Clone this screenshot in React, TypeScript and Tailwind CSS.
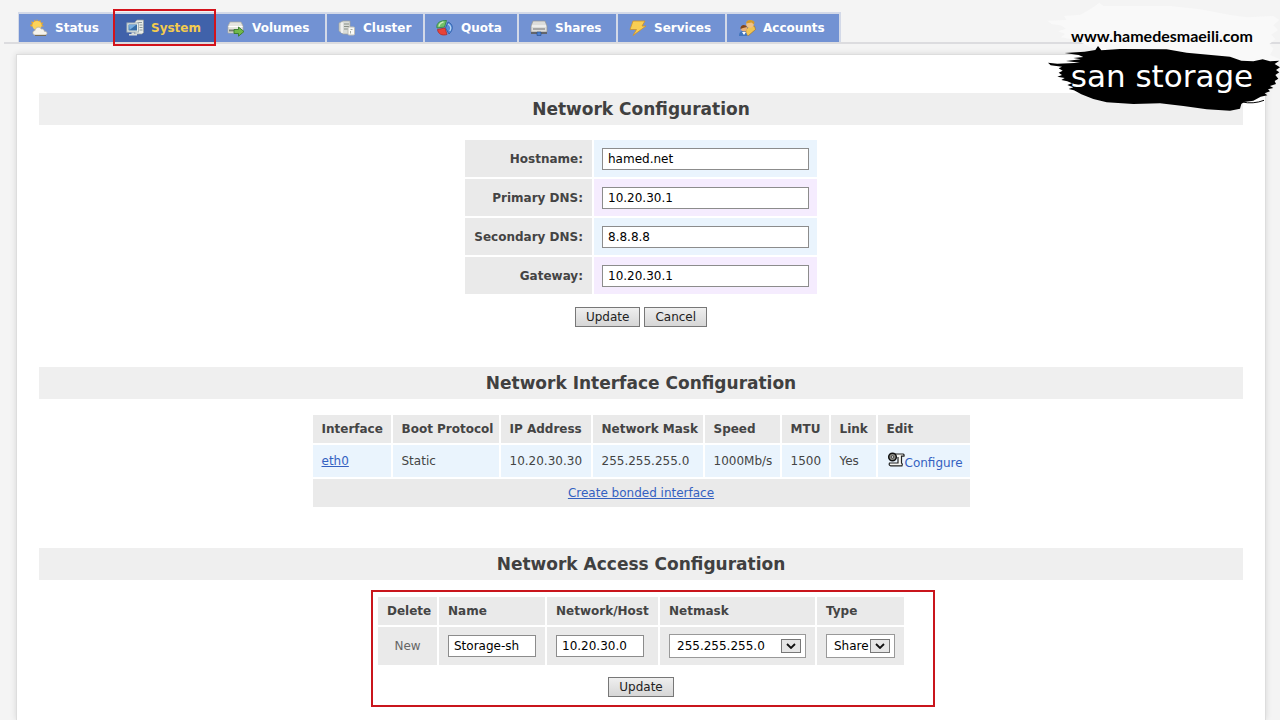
import type { ReactNode } from "react";
import clsx from "clsx";

interface Tab {
  label: string;
  icon: ReactNode;
  width: string;
  active?: boolean;
}

const tabs: Tab[] = [
  { label: "Status", icon: <StatusIcon />, width: "w-[96px]" },
  { label: "System", icon: <SystemIcon />, width: "w-[101px]", active: true },
  { label: "Volumes", icon: <VolumesIcon />, width: "w-[111px]" },
  { label: "Cluster", icon: <ClusterIcon />, width: "w-[98px]" },
  { label: "Quota", icon: <QuotaIcon />, width: "w-[94px]" },
  { label: "Shares", icon: <SharesIcon />, width: "w-[99px]" },
  { label: "Services", icon: <ServicesIcon />, width: "w-[109px]" },
  { label: "Accounts", icon: <AccountsIcon />, width: "w-[114px]" },
];

const hostFields = [
  { id: "hostname", label: "Hostname:", value: "hamed.net" },
  { id: "primary-dns", label: "Primary DNS:", value: "10.20.30.1" },
  { id: "secondary-dns", label: "Secondary DNS:", value: "8.8.8.8" },
  { id: "gateway", label: "Gateway:", value: "10.20.30.1" },
];

const interfaceColumns = [
  { label: "Interface", width: "w-[78px]" },
  { label: "Boot Protocol", width: "w-[106px]" },
  { label: "IP Address", width: "w-[90px]" },
  { label: "Network Mask", width: "w-[110px]" },
  { label: "Speed", width: "w-[75px]" },
  { label: "MTU", width: "w-[47px]" },
  { label: "Link", width: "w-[45px]" },
  { label: "Edit", width: "w-[92px]" },
];

const accessColumns = [
  { label: "Delete", width: "w-[59px]" },
  { label: "Name", width: "w-[106px]" },
  { label: "Network/Host", width: "w-[111px]" },
  { label: "Netmask", width: "w-[155px]" },
  { label: "Type", width: "w-[87px]" },
];

export default function App() {
  return (
    <div className="relative flex min-h-screen flex-col overflow-hidden bg-[#f4f4f4] pt-3 font-['DejaVu_Sans',Verdana,sans-serif] text-xs leading-4 text-[#444]">
      <TabBar />
      <main className="mt-[10px] mr-[14px] ml-4 flex-1 border border-b-0 border-[#ddd] bg-white px-[22px] pt-[38px] shadow-[0_0_6px_rgba(0,0,0,0.12)]">
        <NetworkConfiguration />
        <InterfaceConfiguration />
        <AccessConfiguration />
      </main>
      <Branding />
    </div>
  );
}

function TabBar() {
  return (
    <nav className="ml-1 flex border-b-2 border-[#dcdcdf] pl-[14px]">
      <div className="flex border-t-2 border-l border-[#d3d9e8]">
        {tabs.map((tab) => (
          <a
            key={tab.label}
            href={`#${tab.label.toLowerCase()}`}
            className={clsx(
              "relative flex h-7 items-center gap-[7px] border-r-2 border-[#d3d9e8] pl-[11px] font-bold",
              tab.width,
              tab.active ? "bg-[#4062aa] text-[#f3cb4e]" : "bg-[#7292d3] text-white",
            )}
          >
            <svg viewBox="0 0 18 18" className="size-[18px] shrink-0" aria-hidden="true">
              {tab.icon}
            </svg>
            {tab.label}
            {tab.active && (
              <span className="pointer-events-none absolute -top-[5px] -right-[2px] -bottom-[4px] -left-[2px] z-10 border-2 border-[#d3131b]" />
            )}
          </a>
        ))}
      </div>
    </nav>
  );
}

function SectionTitle({ children }: { children: ReactNode }) {
  return (
    <h2 className="bg-[#efefef] text-center text-[17px] leading-8 font-bold text-[#404040]">
      {children}
    </h2>
  );
}

function Button({ children }: { children: ReactNode }) {
  return (
    <button
      type="button"
      className="h-5 border border-[#777] bg-linear-to-b from-[#efefef] to-[#d6d6d6] px-[10px] text-[#222]"
    >
      {children}
    </button>
  );
}

function NetworkConfiguration() {
  return (
    <section>
      <SectionTitle>Network Configuration</SectionTitle>
      <form className="flex flex-col items-center pt-[13px]">
        <table className="border-separate border-spacing-[2px]">
          <tbody>
            {hostFields.map((field, i) => (
              <tr key={field.id} className="h-[37px]">
                <th scope="row" className="w-[127px] bg-[#eaeaea] pr-[9px] text-right">
                  <label htmlFor={field.id}>{field.label}</label>
                </th>
                <td className={clsx("w-[223px] px-2", i % 2 ? "bg-[#f5ecfe]" : "bg-[#eaf4fd]")}>
                  <input
                    id={field.id}
                    defaultValue={field.value}
                    className="block h-[22px] w-full border border-[#8c8c8c] bg-white px-[5px] text-black"
                  />
                </td>
              </tr>
            ))}
          </tbody>
        </table>
        <div className="mt-[11px] flex gap-1">
          <Button>Update</Button>
          <Button>Cancel</Button>
        </div>
      </form>
    </section>
  );
}

function InterfaceConfiguration() {
  return (
    <section className="mt-10">
      <SectionTitle>Network Interface Configuration</SectionTitle>
      <div className="flex justify-center pt-[14px]">
        <table className="border-separate border-spacing-[2px] text-left">
          <thead>
            <tr className="h-7">
              {interfaceColumns.map((col) => (
                <th key={col.label} className={clsx("bg-[#eaeaea] pl-[9px]", col.width)}>
                  {col.label}
                </th>
              ))}
            </tr>
          </thead>
          <tbody>
            <tr className="h-8 bg-[#eaf4fd]">
              <td className="pl-[9px]">
                <a href="#eth0" className="text-[#3461c1] underline">
                  eth0
                </a>
              </td>
              <td className="pl-[9px]">Static</td>
              <td className="pl-[9px]">10.20.30.30</td>
              <td className="pl-[9px]">255.255.255.0</td>
              <td className="pl-[9px]">1000Mb/s</td>
              <td className="pl-[9px]">1500</td>
              <td className="pl-[9px]">Yes</td>
              <td className="pl-[9px]">
                <a href="#configure" className="flex items-end text-[#3461c1]">
                  <ConfigureIcon />
                  Configure
                </a>
              </td>
            </tr>
            <tr className="h-7 bg-[#eaeaea] text-center">
              <td colSpan={8}>
                <a href="#bond" className="text-[#3461c1] underline">
                  Create bonded interface
                </a>
              </td>
            </tr>
          </tbody>
        </table>
      </div>
    </section>
  );
}

function AccessConfiguration() {
  return (
    <section className="mt-[39px]">
      <SectionTitle>Network Access Configuration</SectionTitle>
      <form className="relative mx-auto flex w-fit flex-col items-center pt-[15px] pb-[10px]">
        <table className="border-separate border-spacing-[2px] text-left">
          <thead>
            <tr className="h-7">
              {accessColumns.map((col) => (
                <th key={col.label} className={clsx("bg-[#eaeaea] pl-[9px]", col.width)}>
                  {col.label}
                </th>
              ))}
            </tr>
          </thead>
          <tbody>
            <tr className="h-[38px] bg-[#eaeaea]">
              <td className="text-center text-[#666]">New</td>
              <td className="pl-[9px]">
                <TextBox label="Name" value="Storage-sh" />
              </td>
              <td className="pl-[9px]">
                <TextBox label="Network/Host" value="10.20.30.0" />
              </td>
              <td className="px-[9px]">
                <Select
                  label="Netmask"
                  options={["255.255.255.0", "255.255.0.0", "255.0.0.0"]}
                />
              </td>
              <td className="px-[9px]">
                <Select label="Type" options={["Share"]} />
              </td>
            </tr>
          </tbody>
        </table>
        <div className="mt-[10px]">
          <Button>Update</Button>
        </div>
        <span className="pointer-events-none absolute top-[10px] -right-[29px] bottom-0 -left-[5px] border-2 border-[#c9151c]" />
      </form>
    </section>
  );
}

function TextBox({ label, value }: { label: string; value: string }) {
  return (
    <input
      aria-label={label}
      defaultValue={value}
      className="block h-[22px] w-[88px] border border-[#8c8c8c] bg-white px-[5px] text-black"
    />
  );
}

function Select({ label, options }: { label: string; options: string[] }) {
  return (
    <div className="relative">
      <select
        aria-label={label}
        className="block h-6 w-full appearance-none border border-[#999] bg-white pl-[7px] text-black"
      >
        {options.map((option) => (
          <option key={option}>{option}</option>
        ))}
      </select>
      <span className="pointer-events-none absolute top-[5px] right-[5px] flex h-[14px] w-5 items-center justify-center border border-[#777] bg-[#e6e6e6]">
        <svg viewBox="0 0 10 6" className="h-[6px] w-[10px]" aria-hidden="true">
          <path d="M1 1l4 4 4-4" fill="none" stroke="#111" strokeWidth="1.8" />
        </svg>
      </span>
    </div>
  );
}

function Branding() {
  return (
    <div className="absolute top-0 right-0 h-[115px] w-[240px] text-center">
      <svg viewBox="0 0 720 345" className="absolute inset-0 size-full" aria-hidden="true">
        <path
          d="M35 72 22 62 80 60 72 48 122 44 160 22 178 8 190 18 390 18 480 28 575 46 622 52 700 48 718 60 700 76 714 90 694 104 706 118 688 132 700 146 690 165 720 178 700 200 600 185 180 150 150 142 110 120 62 112 76 102 54 94 78 86 62 76Z"
          fill="#f9f9f9"
        />
        <path
          d="M24 188 52 191 120 188 78 183 122 178 100 174 130 171 116 165 74 159 134 155 166 150 174 138 184 151 240 147 380 148 440 158 570 170 604 182 640 184 668 178 690 184 718 182 704 192 720 202 708 210 718 217 706 225 715 236 704 243 708 252 690 258 700 264 684 268 690 274 674 280 682 286 662 290 640 302 612 306 604 312 600 326 570 332 500 328 430 318 360 310 280 312 200 307 160 297 124 283 102 271 86 267 100 262 82 255 96 250 82 244 64 240 74 234 52 230 66 225 56 218 68 212 56 205 66 200 32 196Z"
          fill="#000"
        />
        <path d="M606 306Q640 313 672 301" fill="none" stroke="#000" strokeWidth="3" />
      </svg>
      <div className="relative flex flex-col pt-6 pl-1">
        <a
          href="#home"
          className="font-[Lato,sans-serif] text-base leading-6 font-bold text-black"
        >
          www.hamedesmaeili.com
        </a>
        <span className="mt-3 font-['DejaVu_Sans',sans-serif] text-[31px] leading-8 text-white">
          san storage
        </span>
      </div>
    </div>
  );
}

function StatusIcon() {
  return (
    <>
      <path
        d="M7 0l1 2.5L10.500 1l.2 2.700 2.800-.2-1.500 2.300L14 7.500H1L0 6l2-1L1 2.500l2.700.5L4.500.5l1.500 2z"
        fill="#e8a72c"
      />
      <circle cx="7" cy="6.500" r="4.600" fill="#fbd35b" />
      <path
        d="M5 16c-3-.3-2.600-4.300 0-4.400.5-4 5-4.500 6.300-1.500 1.500-.7 3 .4 3 2.200 3.300-.2 3.700 3.500.8 3.700z"
        fill="#f5f3ec"
        stroke="#b7b09b"
        strokeWidth=".7"
      />
      <path d="M5 16.500h11" stroke="#766d58" />
    </>
  );
}

function SystemIcon() {
  return (
    <>
      <path d="M9 3l2-2h6.500v12.500L16 15H9z" fill="#e7ebe7" stroke="#929b9b" strokeWidth=".7" />
      <path d="M11.500 3.500H16M13.500 6h3M13.500 8.500h3M13.500 11h3" stroke="#8c999c" />
      <rect x="1" y="4" width="11.500" height="9" fill="#e9efeb" stroke="#a7b5b8" />
      <rect x="2.500" y="5.500" width="8.500" height="6" fill="#356da6" />
      <path d="M3 6h7l-6.500 5z" fill="#76aee0" />
      <path d="M5.500 13.500h3V15H11v1.500H3V15h2.500z" fill="#d9dedb" />
    </>
  );
}

function VolumesIcon() {
  return (
    <>
      <path d="M3 3h11l2 4v7H1V7z" fill="#e5e5df" stroke="#a9a9a1" strokeWidth=".7" />
      <path d="M1.500 7.500h14" stroke="#fff" />
      <path d="M2 10.500h7v2H2z" fill="#77806f" />
      <path
        d="M7 10.500h4.500V8l5.500 4.500-5.500 4.700v-2.700H7z"
        fill="#72b84a"
        stroke="#367a2c"
        strokeWidth=".9"
      />
    </>
  );
}

function ClusterIcon() {
  return (
    <>
      <path d="M1 4l4-2h7v13H5l-4-3z" fill="#d9dcd8" stroke="#a0a59f" strokeWidth=".7" />
      <path d="M4 3.500v10.500" stroke="#f9f9f7" strokeWidth="1.500" />
      <path d="M6 5h5M6 7.500h5M6 10h4" stroke="#899087" strokeWidth="1.200" />
      <rect x="10" y="8" width="6.500" height="8" rx="1" fill="#fafaf6" stroke="#bebeb6" />
      <path d="M12.500 10.500h2M12.500 12v2.500" stroke="#a8aca5" />
    </>
  );
}

function QuotaIcon() {
  return (
    <>
      <path
        d="M1 9C0 4 4 1.500 10.500 1.500L8.500 8z"
        fill="#72c069"
        stroke="#2c8540"
        strokeWidth=".8"
      />
      <path
        d="M12 3c5.500 2 5.500 8 1 12L9.500 9z"
        fill="#568dd8"
        stroke="#2658a5"
        strokeWidth=".8"
      />
      <path d="M1.500 10.500L9 9l2 6.500c-5 1.500-9-.5-9.500-5z" fill="#e84339" stroke="#b32929" strokeWidth=".8" />
      <path d="M12 5c3 1.500 3.500 4.500 1.800 7" stroke="#b9d7f6" fill="none" strokeWidth="1.300" />
      <path d="M3 7.500c.3-2.500 2-4 4.500-4.500" stroke="#caebba" fill="none" strokeWidth="1.300" />
    </>
  );
}

function SharesIcon() {
  return (
    <>
      <path d="M3 2h12l2 5v6H1V7z" fill="#dcdcda" stroke="#949494" strokeWidth=".7" />
      <path d="M2 7h14" stroke="#fff" />
      <path d="M3 10h12" stroke="#969696" strokeWidth="1.500" />
      <path d="M1 14h16" stroke="#62656b" strokeWidth="2" />
      <path d="M7 13h4v3.500H7z" fill="#477fd0" stroke="#274c88" strokeWidth=".6" />
    </>
  );
}

function ServicesIcon() {
  return (
    <path
      d="M4 2h12l-3 5h4L4 16.500l3.500-6H1z"
      fill="#f9ce53"
      stroke="#cb922c"
      strokeWidth=".8"
    />
  );
}

function AccountsIcon() {
  return (
    <>
      <path d="M8 11l3-4h5.500l1 3.500-7 6-3-1z" fill="#f0c452" stroke="#a06e24" strokeWidth=".6" />
      <circle cx="12" cy="5" r="3.800" fill="#f0c285" />
      <path d="M8 4.500C8 0 15 0 16.500 3l-.5 2.500-2.500-2z" fill="#d19a2e" />
      <path d="M1 17c0-4 2-5 4.500-5S9 14 9 17z" fill="#4275bd" />
      <path d="M4 13l2 3 2-3z" fill="#fff" />
      <circle cx="6" cy="9.500" r="3" fill="#e9b078" />
      <path d="M2.500 10C2 5 8 5 9 8L5 9z" fill="#844619" />
    </>
  );
}

function ConfigureIcon() {
  return (
    <svg viewBox="0 0 18 16" className="mb-[3px] h-4 w-[18px]" aria-hidden="true">
      <path
        d="M8 2h8q1.500.3 1 2.200h-2.500V11q1.500 1 .5 2.800H3.500Q1.500 13 2.500 11H11V5"
        fill="#f5f5f0"
        stroke="#222"
        strokeWidth="1.200"
      />
      <circle cx="5.500" cy="5" r="3.800" fill="#8b8b84" stroke="#111" strokeWidth="1.500" />
      <circle cx="5.500" cy="5" r="1.300" fill="#ddd" stroke="#222" strokeWidth=".7" />
    </svg>
  );
}
